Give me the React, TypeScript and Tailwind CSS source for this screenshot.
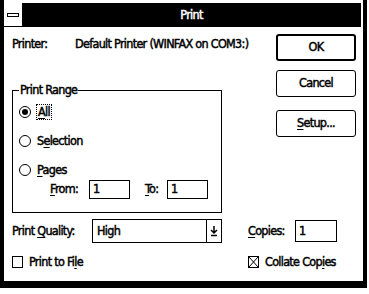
import React from 'react';

const U = ({ children }: { children: React.ReactNode }) => (
  <span className="underline decoration-1 underline-offset-2">{children}</span>
);

const Radio = ({ checked }: { checked?: boolean }) => (
  <span className="flex h-[12px] w-[12px] shrink-0 items-center justify-center rounded-full border border-black">
    {checked && <span className="h-[6px] w-[6px] rounded-full bg-black" />}
  </span>
);

const Button = ({ children, isDefault }: { children: React.ReactNode; isDefault?: boolean }) => (
  <div
    className={`flex h-[27px] w-[80px] items-center justify-center rounded-[3px] border-black ${
      isDefault ? 'border-2' : 'border'
    }`}
  >
    {children}
  </div>
);

const Field = ({ value, w }: { value: string; w: string }) => (
  <div className={`flex h-[19px] items-center border border-black pl-[3px] ${w}`}>{value}</div>
);

export default function App() {
  return (
    <div className="h-[294px] w-[369px] bg-white font-['DejaVu_Sans_Condensed','Liberation_Sans',sans-serif] text-[12.5px] leading-none tracking-[-0.7px] whitespace-nowrap text-black [-webkit-text-stroke:0.45px_black]">
      <div className="flex h-[288px] w-[367px] flex-col border-x-4 border-b-[7px] border-black pt-[3px]">
        {/* title bar */}
        <div className="mr-[2px] flex h-[24px]">
          <div className="flex w-[18px] items-center justify-center border-b border-black bg-white">
            <span className="h-[4px] w-[12px] border border-black" />
          </div>
          <div className="flex flex-1 items-center justify-center bg-black text-white [-webkit-text-stroke:0.45px_white]">
            Print
          </div>
        </div>

        {/* client */}
        <div className="flex flex-1 flex-col">
          <div className="flex">
            <div className="w-[268px] pl-[8px]">
              <div className="mt-[10px] flex h-[14px] items-center">
                <span className="w-[63px]">Printer:</span>
                <span>Default Printer (WINFAX on COM3:)</span>
              </div>

              <div className="relative mt-[39px] h-[123px] w-[210px] border border-black">
                <span className="absolute left-[6px] top-[-7px] bg-white px-[1px]">Print Range</span>
                <div className="flex flex-col gap-[15px] pl-[6px] pt-[14px]">
                  <div className="flex h-[14px] items-center gap-[5px]">
                    <Radio checked />
                    <span className="border border-dotted border-black px-[1px] py-[1px]">
                      <U>A</U>ll
                    </span>
                  </div>
                  <div className="flex h-[14px] items-center gap-[6px]">
                    <Radio />
                    <span>
                      S<U>e</U>lection
                    </span>
                  </div>
                  <div className="flex h-[14px] items-center gap-[6px]">
                    <Radio />
                    <span>
                      <U>P</U>ages
                    </span>
                  </div>
                </div>
                <div className="mt-[3px] flex items-center pl-[37px]">
                  <span className="w-[39px]">
                    <U>F</U>rom:
                  </span>
                  <Field value="1" w="w-[41px]" />
                  <span className="ml-[15px] w-[22px]">
                    <U>T</U>o:
                  </span>
                  <Field value="1" w="w-[41px]" />
                </div>
              </div>
            </div>

            <div className="ml-[4px] flex flex-col">
              <div className="mt-[7px]">
                <Button isDefault>OK</Button>
              </div>
              <div className="mt-[9px]">
                <Button>Cancel</Button>
              </div>
              <div className="mt-[13px]">
                <Button>
                  <span>
                    <U>S</U>etup...
                  </span>
                </Button>
              </div>
            </div>
          </div>

          {/* quality / copies */}
          <div className="mt-[6px] flex h-[24px] items-center pl-[8px]">
            <span className="w-[80px]">
              Print <U>Q</U>uality:
            </span>
            <div className="flex h-[24px] w-[130px] border border-black">
              <span className="flex flex-1 items-center pl-[4px]">High</span>
              <span className="flex w-[15px] items-center justify-center border-l border-black">
                <svg width="8" height="12" viewBox="0 0 8 12">
                  <path d="M4 1v7M1 5l3 3 3-3M1 10.5h6" stroke="black" strokeWidth="1.5" fill="none" />
                </svg>
              </span>
            </div>
            <span className="ml-[26px] w-[47px]">
              <U>C</U>opies:
            </span>
            <div className="flex h-[22px] w-[42px] items-center border border-black pl-[3px]">1</div>
          </div>

          {/* checkboxes */}
          <div className="mt-[13px] flex h-[12px] items-center pl-[8px]">
            <div className="flex w-[236px] items-center">
              <span className="h-[12px] w-[11px] border border-black" />
              <span className="ml-[6px]">
                Print to Fi<U>l</U>e
              </span>
            </div>
            <div className="flex items-center">
              <span className="flex h-[12px] w-[11px] items-center justify-center border border-black">
                <svg width="9" height="10" viewBox="0 0 9 10">
                  <path d="M0 0l9 10M9 0L0 10" stroke="black" strokeWidth="1" fill="none" />
                </svg>
              </span>
              <span className="ml-[6px]">
                Collate Cop<U>i</U>es
              </span>
            </div>
          </div>
        </div>
      </div>
    </div>
  );
}
